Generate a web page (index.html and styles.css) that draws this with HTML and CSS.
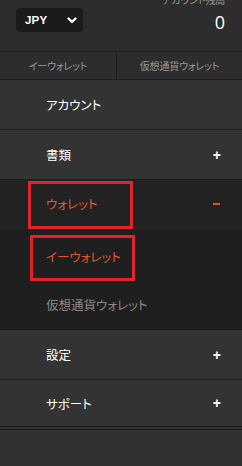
FILE: index.html
```html
<!DOCTYPE html>
<html lang="ja">
<head>
<meta charset="utf-8">
<link rel="stylesheet" href="styles.css">
</head>
<body>
<div class="app">
  <header class="top">
    <div class="select">
      <span class="cur">JPY</span>
      <svg class="chev" width="10" height="7" viewBox="0 0 10 7"><path d="M1.5 1.5 L5 5 L8.5 1.5" fill="none" stroke="#fff" stroke-width="2.2" stroke-linecap="round" stroke-linejoin="round"/></svg>
    </div>
    <div class="balance">
      <div class="bal-label">アカウント残高</div>
      <div class="bal-value">0</div>
    </div>
  </header>
  <nav class="tabs">
    <div class="tab">イーウォレット</div>
    <div class="tab">仮想通貨ウォレット</div>
  </nav>
  <ul class="menu">
    <li class="row"><span class="label">アカウント</span></li>
    <li class="row"><span class="label">書類</span><span class="plus">+</span></li>
    <li class="row active"><span class="label boxed">ウォレット</span><span class="minus"></span></li>
    <li class="sub sub-first"><span class="label boxed sub-active">イーウォレット</span></li>
    <li class="sub sub-second"><span class="label sub-label">仮想通貨ウォレット</span></li>
    <li class="row"><span class="label">設定</span><span class="plus">+</span></li>
    <li class="row last"><span class="label">サポート</span><span class="plus">+</span></li>
  </ul>
</div>
</body>
</html>
```
FILE: styles.css
```css
* { box-sizing: border-box; }
html, body { margin: 0; padding: 0; }
body {
  background: #303030;
  font-family: "Noto Sans CJK JP", "Noto Sans", sans-serif;
  font-feature-settings: "palt";
  color: #fff;
  width: 242px;
  height: 466px;
  overflow: hidden;
}
.app { display: flex; flex-direction: column; }
.top {
  height: 52px;
  background: #2d2d2d;
  display: flex;
  justify-content: space-between;
  align-items: flex-start;
  padding: 8px 17px 0 16px;
  border-bottom: 1px solid #1f1f1f;
}
.select {
  width: 67px;
  height: 24px;
  background: #1b1b1b;
  border-radius: 4px;
  display: flex;
  align-items: center;
  justify-content: space-between;
  padding: 0 6px 0 9px;
}
.cur {
  font-family: "Liberation Sans", Arial, sans-serif;
  font-weight: bold;
  font-size: 11.5px;
  letter-spacing: 0.2px;
}
.balance {
  display: flex;
  flex-direction: column;
  align-items: flex-end;
  margin-top: -15px;
}
.bal-label {
  font-size: 10px;
  color: #9a9a9a;
  line-height: 14px;
  letter-spacing: -0.2px;
  white-space: nowrap;
}
.bal-value {
  font-family: "Open Sans", sans-serif;
  font-size: 18px;
  line-height: 20px;
  margin-top: 5px;
}
.tabs {
  height: 28px;
  display: grid;
  grid-template-columns: 117px 1fr;
  background: #2d2d2d;
  border-bottom: 1px solid #1f1f1f;
}
.tab {
  display: flex;
  align-items: center;
  justify-content: center;
  font-size: 10px;
  color: #9a9a9a;
  letter-spacing: -0.2px;
  white-space: nowrap;
}
.tab:first-child { border-right: 1px solid #1f1f1f; }
.menu { list-style: none; margin: 0; padding: 0; }
.row {
  height: 50px;
  background: #333333;
  border-bottom: 1px solid #1e1e1e;
  display: flex;
  align-items: center;
  justify-content: space-between;
  padding: 0 21px 0 46px;
}
.label {
  font-size: 12.5px;
  white-space: nowrap;
}
.plus {
  font-family: "Liberation Sans", Arial, sans-serif;
  font-weight: bold;
  font-size: 14px;
}
.minus {
  width: 7px;
  height: 2px;
  background: #e4502d;
  margin-right: 1px;
  margin-bottom: 3px;
}
.row.active {
  background: #222222;
  border-bottom: none;
}
.boxed {
  border: 3px solid #e2232a;
  margin-left: -18px;
  padding-left: 15px;
  padding-bottom: 4px;
  width: 105px;
  height: 48px;
  display: flex;
  align-items: center;
  color: #e4582f;
}
.sub {
  height: 50px;
  background: #1f1f1f;
  display: flex;
  align-items: center;
  padding-left: 46px;
}
.sub-first { align-items: flex-start; }
.sub-active {
  margin-left: -16px;
  margin-top: 5px;
  height: 46px;
  padding-left: 13px;
}
.sub-label { color: #8a8a8a; }
.sub-second { border-bottom: 1px solid #1a1a1a; }
.row.last { border-bottom: 4px double #1a1a1a; }
```
